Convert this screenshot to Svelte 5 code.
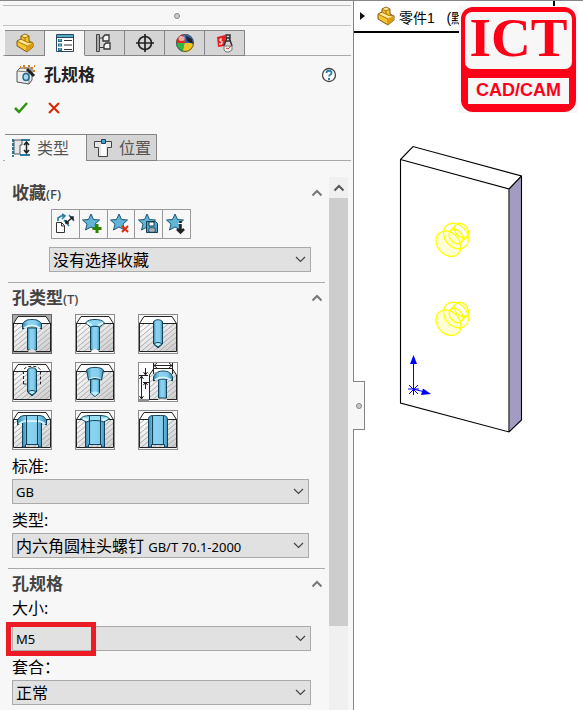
<script lang="ts">
  type Hole = { id: string; label: string }

  const managerTabs = [
    { id: 'feature', label: '特征管理' },
    { id: 'property', label: '属性管理' },
    { id: 'config', label: '配置管理' },
    { id: 'dimxpert', label: '尺寸专家' },
    { id: 'display', label: '外观管理' },
    { id: 'cam', label: '加工管理' },
  ]

  const favoriteTools = [
    { id: 'defaults', label: '应用默认值' },
    { id: 'add', label: '添加收藏' },
    { id: 'remove', label: '删除收藏' },
    { id: 'save', label: '保存收藏' },
    { id: 'load', label: '装入收藏' },
  ]

  const holes: Hole[] = [
    { id: 'counterbore', label: '柱形沉头孔' },
    { id: 'countersink', label: '锥形沉头孔' },
    { id: 'plain', label: '孔' },
    { id: 'tap', label: '直螺纹孔' },
    { id: 'taper', label: '锥形螺纹孔' },
    { id: 'legacy', label: '旧制孔' },
    { id: 'slot-bore', label: '柱孔槽口' },
    { id: 'slot-sink', label: '锥孔槽口' },
    { id: 'slot', label: '槽口' },
  ]

  let activeTab = $state('property')
  let page = $state('type')
  let hole = $state('counterbore')
</script>

{#snippet part()}
  <svg width="20" height="20" viewBox="0 0 20 20" aria-hidden="true">
    <path d="M2 8 6 6V3l4-2 4 2v5l4 2v4l-6 5-10-6z" fill="#f6c52f" stroke="#7b5714" />
    <path d="m2 8 10 5v6M6 6l6 3 6 1M6 3l4 2 4-2M10 5v3" fill="none" stroke="#a87714" />
    <path d="m12 13 6-3v4l-6 5z" fill="#d99a15" />
    <path d="m3 8 3-1 6 3 4 0-4 2zM7 3l3-1.500 3 1.500-3 1z" fill="#ffeaa0" />
  </svg>
{/snippet}

{#snippet star()}
  <path d="m9 1 2.500 5.500 6 .5-4.500 4 1.500 6L9 14l-5.500 3L5 11 .5 7l6-.5z" fill="#62b4d6" stroke="#1c5773" />
{/snippet}

{#snippet chevronUp()}
  <svg width="12" height="8" viewBox="0 0 12 8" aria-hidden="true">
    <path d="m1.500 6.500 4.500-4.500 4.500 4.500" fill="none" stroke="currentColor" stroke-width="2" />
  </svg>
{/snippet}

{#snippet chevronDown()}
  <svg class="arrow" width="11" height="7" viewBox="0 0 11 7" aria-hidden="true">
    <path d="m1 1 4.500 4.500L10 1" fill="none" stroke="#444" stroke-width="1.200" />
  </svg>
{/snippet}

{#snippet managerIcon(id: string)}
  {#if id === 'feature'}
    {@render part()}
  {:else}
    <svg width="20" height="20" viewBox="0 0 20 20" aria-hidden="true">
      {#if id === 'property'}
        <path d="M1.500 1.500h17v17h-17z" fill="#fff" stroke="#27495c" />
        <path d="M2 2h16v2H2z" fill="#55a9c9" />
        <path d="M1 4.500h18" stroke="#27495c" />
        <path d="M3 6h4v3H3zM3 10.500h4v3H3zM3 15h4v3H3z" fill="#256b8b" />
        <path d="M4 7h2M4 12h2M4 16h2" stroke="#9ddcf2" />
        <path d="M9 7.500h8M9 12h8M9 16.500h8" stroke="#333" />
      {:else if id === 'config'}
        <path d="M3.500 1.500v17M3 5h6M3 14.500h7" fill="none" stroke="#333" />
        <path d="M1.500 1.500h3v17h-3z" fill="#aaa" stroke="#444" />
        <path d="m8 4 2-2h4v6H8zM9 12l2-2h4v6H9z" fill="#f5f5f5" stroke="#333" stroke-width="1.300" />
      {:else if id === 'dimxpert'}
        <circle cx="10" cy="10" r="6.500" fill="none" stroke="#222" stroke-width="1.700" />
        <path d="M10 1v18M1 10h18" stroke="#222" stroke-width="1.700" />
      {:else if id === 'display'}
        <path d="M10 10 1 10A9 9 0 0 1 9 1z" fill="#e22b20" />
        <path d="M9 1a9 9 0 0 1 10 9h-9z" fill="#2765be" />
        <path d="M10 10H1a9 9 0 0 0 7 9z" fill="#32b449" />
        <path d="M10 10h9a9 9 0 0 1-11 9z" fill="#f2c51c" />
        <path d="m11 3 6 3 1 5-6-3z" fill="#222" />
        <circle cx="10" cy="10" r="8.500" fill="none" stroke="#555" />
        <ellipse cx="6.500" cy="5.500" rx="3" ry="2.500" fill="#fff" opacity=".6" />
      {:else}
        <path d="m2 4 8-2v11l-7 1z" fill="#e42323" />
        <path d="M7 6H5v2h2v3H4" fill="none" stroke="#fff" />
        <path d="m12 4-3 9M14 4l3 9M11 8h5M11 2h4v3h-4z" fill="none" stroke="#333" stroke-width="1.500" />
        <path d="M9 13h8v4l-3 2h-3l-2-2z" fill="#eee" stroke="#777" />
        <path d="m11 15 2 1 3-3" fill="none" stroke="#d33" />
      {/if}
    </svg>
  {/if}
{/snippet}

{#snippet favoriteIcon(id: string)}
  <svg width="22" height="22" viewBox="0 0 22 22" aria-hidden="true">
    {#if id === 'defaults'}
      <path d="M2.500 9.500h5l3 3v7h-8z" fill="#fff" stroke="#333" />
      <path d="M7.500 10v3h3" fill="none" stroke="#333" />
      <path d="M4 8V5l3-2h3M8 1l3 2-3 3" fill="none" stroke="#287fa5" stroke-width="1.700" />
      <path d="m10 7 5 6M15 2l5 6" stroke="#287fa5" stroke-width="1.500" />
      <path d="m12 10 7-6M12 7v3h3M16 4h3v3" fill="none" stroke="#222" stroke-width="1.500" />
    {:else}
      {@render star()}
      {#if id === 'add'}
        <path d="M15 11v9M10.500 15.500h9" stroke="#308000" stroke-width="3" />
      {:else if id === 'remove'}
        <path d="m12 13 6 6m0-6-6 6" stroke="#e02a0b" stroke-width="2" />
      {:else if id === 'save'}
        <path d="M8.500 8.500h9l2 2v9h-11z" fill="#55a7ca" stroke="#183e52" />
        <path d="M11 9h5v4h-5zM11 15h6v4h-6z" fill="#fff" stroke="#183e52" />
        <path d="M12 17h4" stroke="#555" />
      {:else}
        <path d="M14.500 8v12m-3.500-4 3.500 3.500L18 16" fill="none" stroke="#222" stroke-width="2.500" />
        <path d="M12 10.500h5" stroke="#fff" />
      {/if}
    {/if}
  </svg>
{/snippet}

{#snippet holeIcon(id: string)}
  <svg width="38" height="38" viewBox="1 1 38 38" aria-hidden="true">
    {#if id === 'legacy'}
      <path d="M1 1h38v38H1z" fill="#fff" />
      <path d="M11.500 38V13l2-3h23l2 3v25z" fill="url(#steel)" />
      <path d="M11.500 38V13l2-3h23l2 3v25z" fill="url(#hatch)" />
      <path d="M15 6.500h19M11.500 38V13l4-6M38.500 38V13l-4-6M11 37.500h9M29 37.500h10" fill="none" stroke="#222" />
      <path d="M15.500 1v11M34.500 1v11M16 3.500h18M19 1l-3 2.500L19 6M31 1l3 2.500L31 6M1 13.500h9M3.500 14v23M1.500 17l2-3 2 3M1.500 34l2 3 2-3M1 38h10M7.500 6v7M5.500 10l2 3 2-3M5 20.500h6M7.500 20v7M5.500 23l2-3 2 3" fill="none" stroke="#222" />
      <path d="M20.500 17h8v19h-8z" fill="url(#bore)" stroke="#12425b" />
      <path d="M15.500 19v-4c2-5 6-6 9.500-6s8 1 9.500 6v4c-5-3-13-3-19 0z" fill="url(#bore)" stroke="#12425b" />
      <path d="M17 18c5-3 11-3 16 0" fill="none" stroke="#d9f4ff" stroke-width="2" />
    {:else}
      <path d="M1.500 9.500 6 2.500h28l4.500 7z" fill="#fff" />
      <path d="M1 9h38v28H1z" fill="url(#steel)" />
      <path d="M1 9h38v28H1z" fill="url(#hatch)" />
      <path d="M1.500 37.500V9.500L6 2.500h28l4.500 7v28zM1 9.500h38" fill="none" stroke="#222" />
      {#if id === 'counterbore'}
        <path d="M15.500 14h9v22h-9z" fill="url(#bore)" stroke="#12425b" />
        <path d="M10.500 15v-5c2-4 6-4.500 9.500-4.500s7.500.5 9.500 4.500v5c-5-3-14-3-19 0z" fill="url(#bore)" stroke="#12425b" />
        <path d="M12 14c5-3 11-3 16 0" fill="none" stroke="#d9f4ff" stroke-width="2" />
        <path d="M16 38c1-4 7-4 8 0z" fill="#ddd" />
      {:else if id === 'countersink'}
        <path d="M15.500 12h9v24h-9z" fill="url(#bore)" stroke="#12425b" />
        <path d="M10.500 9c2-3 6-3.500 9.500-3.500S27.500 6 29.500 9l-5 4c-3-1-6-1-9 0z" fill="#8ed5ef" stroke="#12425b" />
        <path d="m12 9 5 2M28 9l-5 2" stroke="#e0f7ff" stroke-width="2" />
        <path d="M16 38c1-4 7-4 8 0z" fill="#fff" />
      {:else if id === 'plain' || id === 'tap'}
        <path d="M15.500 30V8c1-3 8-3 9 0v22L20 34z" fill="url(#bore)" stroke="#12425b" />
        <path d="M16 30c2-2 6-2 8 0l-4 3z" fill="#b9ecfb" stroke="#12425b" />
        {#if id === 'tap'}
          <path d="M11.500 22V8c2-5 15-5 17 0v14h-3m-14 0h4" fill="none" stroke="#222" stroke-dasharray="3 2" />
        {/if}
      {:else if id === 'taper'}
        <path d="M15.500 17h9v14L20 34.500 15.500 31z" fill="url(#bore)" stroke="#12425b" />
        <path d="M16 31c2-2 6-2 8 0l-4 3z" fill="#b9ecfb" />
        <path d="M11.500 8c3-3.500 14-3.500 17 0l-2 10c-4-2-9-2-13 0z" fill="url(#bore)" stroke="#12425b" />
        <path d="M14 17c4-2 8-2 12 0" fill="none" stroke="#d9f4ff" />
      {:else}
        <path d="M10.500 37V10c0-5 3-4.500 9.500-4.500s9.500-.5 9.500 4.500v27h-3v-2.500h-13V37z" fill="url(#bore)" stroke="#12425b" />
        {#if id === 'slot-bore'}
          <path d="M5.500 15v-5c3-5 5-4.500 14.500-4.500S31.500 5 34.500 10v5c-4-2-5-4-14.500-4S9 13 5.500 15z" fill="url(#bore)" stroke="#12425b" />
          <path d="M7 14c4-3 6-3 13-3s9 0 13 3" fill="none" stroke="#d9f4ff" stroke-width="2" />
        {:else if id === 'slot-sink'}
          <path d="M5.500 9c2-3 5-3.500 14.500-3.500S32.500 6 34.500 9l-6 3c-4-2-13-2-17 0z" fill="#9cdef3" stroke="#12425b" />
          <path d="m8 9 5 1M32 9l-5 1" stroke="#e0f7ff" stroke-width="2" />
        {/if}
        <path d="M14.500 6v28M25.500 6v28" stroke="#12425b" />
      {/if}
    {/if}
  </svg>
{/snippet}

<svg class="defs" width="0" height="0" aria-hidden="true">
  <defs>
    <linearGradient id="steel" x2="1" y2="1">
      <stop offset="0" stop-color="#fff" />
      <stop offset="1" stop-color="#ccc" />
    </linearGradient>
    <linearGradient id="bore">
      <stop offset="0" stop-color="#3389b2" />
      <stop offset=".3" stop-color="#8bd3f0" />
      <stop offset=".7" stop-color="#86cfec" />
      <stop offset="1" stop-color="#3f94bb" />
    </linearGradient>
    <pattern id="hatch" width="6" height="5" patternUnits="userSpaceOnUse">
      <path d="m-1 6 8-7M-1 1l2-2M5 6l2-2" stroke="#aaa" />
    </pattern>
  </defs>
</svg>

<div class="app">
  <aside class="panel">
    <div class="grip"><span class="dot"></span></div>

    <nav class="manager-tabs">
      {#each managerTabs as tab (tab.id)}
        <button
          class="manager-tab"
          class:active={activeTab === tab.id}
          aria-label={tab.label}
          onclick={() => (activeTab = tab.id)}
        >
          {@render managerIcon(tab.id)}
        </button>
      {/each}
    </nav>

    <header class="title">
      <svg width="20" height="20" viewBox="0 0 20 20" aria-hidden="true">
        <path d="m1 6 3-3h12v12l-3 4-12-2z" fill="#eee" stroke="#555" />
        <path d="m1 6 12 1 3-4M13 7v12" fill="none" stroke="#777" />
        <ellipse cx="10" cy="12" rx="3" ry="3.500" fill="#a8d8eb" stroke="#256b8f" stroke-width="1.500" />
        <path d="m11 4 7 7" stroke="#222" stroke-width="3" />
        <path d="M4 2h1M7 1h2M8 3h2M12 1h2M15 3h2M18 1h1M17 6h2" stroke="#dd7b16" stroke-width="2" />
      </svg>
      <h1>孔规格</h1>
      <button class="icon-button help" aria-label="帮助">
        <svg width="16" height="16" viewBox="0 0 16 16" aria-hidden="true">
          <circle cx="8" cy="8" r="6.500" fill="#fff" stroke="#444" stroke-width="1.300" />
          <path d="M5.500 6c0-3 5-3 5 0 0 2-2.500 1.500-2.500 3.500" fill="none" stroke="#2680ab" stroke-width="1.800" />
          <path d="M7 11h2v2H7z" fill="#2680ab" />
        </svg>
      </button>
    </header>

    <div class="actions">
      <button class="icon-button" aria-label="确定">
        <svg width="16" height="14" viewBox="0 0 16 14" aria-hidden="true">
          <path d="m2 7 4 4 8-9" fill="none" stroke="#329510" stroke-width="2.500" />
        </svg>
      </button>
      <button class="icon-button" aria-label="取消">
        <svg width="14" height="14" viewBox="0 0 14 14" aria-hidden="true">
          <path d="m2 2 10 10M12 2 2 12" fill="none" stroke="#dc2400" stroke-width="2" />
        </svg>
      </button>
    </div>

    <nav class="page-tabs">
      <button class="page-tab" class:active={page === 'type'} onclick={() => (page = 'type')}>
        <svg width="20" height="20" viewBox="0 0 20 20" aria-hidden="true">
          <path d="M2 1v18" stroke="#2a7b9f" stroke-width="2" stroke-dasharray="3 1" />
          <path d="M3 2h8v5H9v9H3z" fill="#e6e6e6" stroke="#555" />
          <path d="M10 2h9M9 17h10" stroke="#2a7b9f" stroke-width="2" />
          <path d="M15.500 4v11M13 7l2.500-3L18 7M13 12l2.500 3 2.500-3" fill="none" stroke="#222" stroke-width="1.500" />
        </svg>
        类型
      </button>
      <button class="page-tab" class:active={page === 'position'} onclick={() => (page = 'position')}>
        <svg width="20" height="20" viewBox="0 0 20 20" aria-hidden="true">
          <path d="M1.500 3.500h17v6h-4v9h-9v-9h-4z" fill="#e5e5e5" stroke="#444" />
          <path d="M8 4h5v14H8z" fill="#fff" />
          <path d="M8.500 1.500h4v4h-4z" fill="#45a4cb" stroke="#19465e" />
        </svg>
        位置
      </button>
    </nav>

    <div class="scroll">
      <div class="content">
        <section>
          <div class="section-head">
            <h2>收藏<small>(F)</small></h2>
            <button class="icon-button" aria-label="折叠收藏">{@render chevronUp()}</button>
          </div>
          <div class="section-body favorites">
            <div class="toolbar">
              {#each favoriteTools as tool (tool.id)}
                <button aria-label={tool.label}>{@render favoriteIcon(tool.id)}</button>
              {/each}
            </div>
            <div class="select">
              <select aria-label="收藏">
                <option>没有选择收藏</option>
              </select>
              {@render chevronDown()}
            </div>
          </div>
        </section>

        <section>
          <div class="section-head">
            <h2>孔类型<small>(T)</small></h2>
            <button class="icon-button" aria-label="折叠孔类型">{@render chevronUp()}</button>
          </div>
          <div class="section-body">
            <div class="holes">
              {#each holes as item (item.id)}
                <button
                  class="hole"
                  class:selected={hole === item.id}
                  aria-label={item.label}
                  aria-pressed={hole === item.id}
                  onclick={() => (hole = item.id)}
                >
                  {@render holeIcon(item.id)}
                </button>
              {/each}
            </div>
            <div class="field">
              <label for="standard">标准:</label>
              <div class="select latin">
                <select id="standard">
                  <option>GB</option>
                </select>
                {@render chevronDown()}
              </div>
            </div>
            <div class="field">
              <label for="fastener">类型:</label>
              <div class="select mixed">
                <select id="fastener">
                  <option>内六角圆柱头螺钉 GB/T 70.1-2000</option>
                </select>
                <span class="face" aria-hidden="true">内六角圆柱头螺钉 <small>GB/T 70.1-2000</small></span>
                {@render chevronDown()}
              </div>
            </div>
          </div>
        </section>

        <section>
          <div class="section-head">
            <h2>孔规格</h2>
            <button class="icon-button" aria-label="折叠孔规格">{@render chevronUp()}</button>
          </div>
          <div class="section-body spec">
            <div class="field size">
              <label for="size">大小:</label>
              <div class="select latin">
                <select id="size">
                  <option>M5</option>
                </select>
                {@render chevronDown()}
                <span class="highlight"></span>
              </div>
            </div>
            <div class="field">
              <label for="fit">套合：</label>
              <div class="select">
                <select id="fit">
                  <option>正常</option>
                </select>
                {@render chevronDown()}
              </div>
            </div>
          </div>
        </section>
      </div>

      <div class="scrollbar">
        <button class="icon-button" aria-label="向上滚动">{@render chevronUp()}</button>
        <div class="thumb"></div>
      </div>
    </div>
  </aside>

  <main class="viewport">
    <button class="splitter" aria-label="折叠面板"><span class="dot"></span></button>

    <div class="tree">
      <svg width="5" height="8" viewBox="0 0 5 8" aria-hidden="true">
        <path d="m0 0 5 4-5 4z" fill="#111" />
      </svg>
      {@render part()}
      <span class="tree-name">零件1&nbsp;&nbsp; (默</span>
    </div>

    <div class="logo">
      <div class="logo-frame">
        <div class="logo-top">ICT</div>
        <div class="logo-bottom">CAD/CAM</div>
      </div>
    </div>

    <svg class="model" width="126" height="290" viewBox="398 144 126 290" role="img" aria-label="零件模型">
      <path d="m509.500 188.500 12-12.500v244l-12 12z" fill="#a39bc2" />
      <path
        d="m400.500 159.500 12.500-13 108.500 29.500v244l-12.500 12-108.500-29zm0 0 108.500 29.500v243M509 189l12.500-13"
        fill="none"
        stroke="#000"
        stroke-width="1.100"
      />
      {#each [0, 79] as offset (offset)}
        <g transform="translate(0 {offset})" fill="none" stroke="#ff0" stroke-width="1.300">
          <ellipse cx="448.500" cy="243.700" rx="11" ry="14" transform="rotate(-42 448.500 243.700)" fill="#ffffd5" />
          <ellipse cx="456" cy="236" rx="11" ry="14" transform="rotate(-42 456 236)" />
          <ellipse cx="456" cy="236.500" rx="6" ry="8" transform="rotate(-42 456 236.500)" />
          <ellipse cx="461.500" cy="230.500" rx="6" ry="8" transform="rotate(-42 461.500 230.500)" />
          <path d="m450 231 6-6M461 242l7-6" />
        </g>
      {/each}
      <g stroke="#00f" fill="#00f">
        <path d="M413.500 389v-28M413 389l12 3M408 389h11M413.500 384v11M409 385l9 9M418 385l-9 9" />
        <path d="m413.500 355 3.500 9h-7zM431 394l-10 1 2-6.500z" stroke="none" />
      </g>
    </svg>
  </main>
</div>

<style>
  :global(body) {
    margin: 0;
    background: #fff;
  }

  .defs {
    position: absolute;
  }

  .app {
    display: flex;
    min-height: 100vh;
    box-sizing: border-box;
    border-top: 1px solid #88858a;
    background: #fff;
    color: #000;
    font-family: 'Noto Sans', 'Noto Sans CJK SC', sans-serif;
    font-size: 16px;
    line-height: 24px;
  }

  .app svg {
    display: block;
    flex: none;
  }

  button,
  select {
    margin: 0;
    padding: 0;
    border: 0;
    border-radius: 0;
    background: none;
    color: inherit;
    font: inherit;
  }

  .icon-button {
    display: flex;
    color: #777;
  }

  .panel {
    display: flex;
    flex-direction: column;
    flex: 0 0 354px;
    box-sizing: border-box;
    border-right: 1px solid #858585;
    background: #f7f7f7;
  }

  .grip {
    display: flex;
    align-items: center;
    justify-content: center;
    height: 19px;
    margin: 4px 2px 0 3px;
    border-top: 1px solid #bbb;
    border-bottom: 1px solid #c4c4c4;
  }

  .dot {
    width: 4px;
    height: 4px;
    border: 1px solid #888;
    border-radius: 50%;
    background: #ccc;
  }

  .manager-tabs,
  .page-tabs {
    display: flex;
    margin: 4px 2px 0 3px;
    padding-left: 2px;
    box-shadow: inset 0 -1px #aaa;
  }

  .manager-tab {
    display: flex;
    align-items: center;
    justify-content: center;
    width: 40px;
    height: 26px;
    border: 1px solid #858585;
    border-left: 0;
    background: #d5d5d5;
  }

  .manager-tab.active {
    border-bottom-color: #f7f7f7;
    background: #f7f7f7;
  }

  .title {
    display: flex;
    align-items: center;
    gap: 8px;
    height: 38px;
    padding: 0 16px;
  }

  .title h1 {
    margin: 0;
    color: #222;
    font-size: 17px;
    font-weight: 700;
  }

  .help {
    margin-left: auto;
  }

  .actions {
    display: flex;
    align-items: center;
    gap: 18px;
    height: 28px;
    padding: 0 13px;
  }

  .page-tabs {
    margin-top: 12px;
  }

  .page-tab {
    display: flex;
    align-items: center;
    gap: 6px;
    height: 27px;
    padding: 0 5px 0 6px;
    border: 1px solid #858585;
    background: #d5d5d5;
    color: #555;
  }

  .page-tab.active {
    padding-right: 17px;
    border-right: 0;
    border-left: 0;
    border-bottom-color: #f7f7f7;
    background: #f7f7f7;
  }

  .scroll {
    display: flex;
    flex: 1;
    padding: 0 5px 0 3px;
  }

  .content {
    flex: 1;
    padding: 17px 4px 5px 5px;
  }

  section {
    padding-top: 3px;
  }

  section + section {
    margin-top: 10px;
    border-top: 1px solid #aaa;
  }

  .section-head {
    display: flex;
    align-items: center;
    justify-content: space-between;
    height: 24px;
    padding: 0 2px 0 4px;
  }

  .section-head h2 {
    margin: 0;
    color: #444;
    font-size: 17px;
    font-weight: 700;
  }

  .section-head small {
    font-size: 13px;
    font-weight: 500;
    line-height: 1;
  }

  .section-body {
    padding: 4px 16px 0 4px;
  }

  .favorites {
    padding: 4px 14px 0 41px;
  }

  .spec {
    padding: 0 14px 0 4px;
  }

  .toolbar {
    display: flex;
    width: 138px;
    margin-left: 2px;
    border: 1px solid #999;
  }

  .toolbar button {
    display: flex;
    flex: 1;
    align-items: center;
    justify-content: center;
    height: 28px;
  }

  .toolbar button + button {
    border-left: 1px solid #999;
  }

  .select {
    display: grid;
    align-items: center;
    position: relative;
  }

  .select select,
  .face,
  .arrow {
    grid-area: 1 / 1;
  }

  .select select {
    width: 100%;
    height: 25px;
    padding: 0 24px 1px 3px;
    border: 1px solid #aaa;
    background: #e1e1e1;
    color: #000;
    appearance: none;
  }

  .select.latin select {
    font-size: 13px;
  }

  .select.mixed select {
    color: transparent;
  }

  .face {
    padding-left: 4px;
    white-space: nowrap;
    pointer-events: none;
  }

  .face small {
    font-size: 13px;
    line-height: 1;
  }

  .arrow {
    justify-self: end;
    margin-right: 5px;
    z-index: 1;
    pointer-events: none;
  }

  .favorites .select {
    margin-top: 8px;
  }

  .holes {
    display: grid;
    grid-template-columns: repeat(3, 40px);
    gap: 8px 23px;
  }

  .hole {
    width: 40px;
    height: 40px;
    border: 1px solid #8c8c8c;
    background: #f7f7f7;
  }

  .hole.selected {
    border-color: #666;
    background: #aaa;
  }

  .field {
    display: flex;
    flex-direction: column;
    gap: 1px;
    margin-top: 4px;
  }

  .field.size {
    gap: 6px;
    margin-top: 0;
  }

  .highlight {
    position: absolute;
    top: -4px;
    left: -6px;
    box-sizing: border-box;
    width: 90px;
    height: 34px;
    border: 5px solid #ed1c24;
    pointer-events: none;
  }

  .scrollbar {
    display: flex;
    flex-direction: column;
    width: 19px;
    margin-top: 16px;
    background: #f0f0f0;
  }

  .scrollbar button {
    align-items: center;
    justify-content: center;
    height: 21px;
    color: #555;
  }

  .thumb {
    flex: 0 1 428px;
    background: #cdcdcd;
  }

  .viewport {
    position: relative;
    flex: 1;
    min-width: 0;
  }

  .splitter {
    display: flex;
    align-items: center;
    justify-content: center;
    position: absolute;
    top: 380px;
    left: -1px;
    width: 12px;
    height: 49px;
    border: 1px solid #858585;
    border-left: 0;
    background: #f7f7f7;
  }

  .tree {
    display: flex;
    align-items: center;
    height: 30px;
    margin-right: 28px;
    padding: 0 94px 0 6px;
    border-right: 2px solid #000;
    border-bottom: 2px solid #000;
    font-family: 'Liberation Sans', 'Noto Sans CJK SC', sans-serif;
    font-size: 14px;
    white-space: nowrap;
  }

  .tree svg + svg {
    margin: 0 3px 0 11px;
  }

  .tree-name {
    min-width: 0;
    padding-top: 4px;
    overflow: hidden;
  }

  .logo {
    position: absolute;
    top: 5px;
    right: 5px;
    padding: 1px 2px;
    background: #f7f7f7;
    color: #ff0019;
  }

  .logo-frame {
    box-sizing: border-box;
    width: 115px;
    padding: 5px 4px 8px;
    border-radius: 12px;
    background: #ff0019;
    text-align: center;
  }

  .logo-top {
    height: 57px;
    border-radius: 7px;
    background: #f7f7f7;
    font: 700 55px/51px 'Liberation Serif', serif;
  }

  .logo-bottom {
    height: 26px;
    margin: 9px 3px 0;
    background: #f7f7f7;
    font: 700 18px/24px 'Liberation Sans', sans-serif;
  }

  .model {
    margin: 111px 0 0 44px;
  }
</style>
